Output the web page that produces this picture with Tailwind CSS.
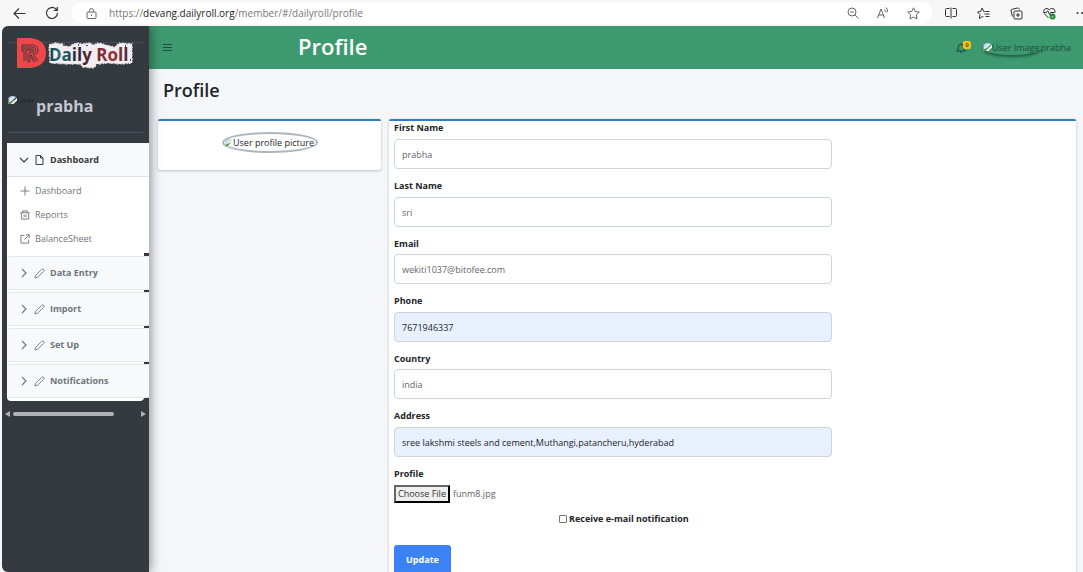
<!DOCTYPE html>
<html lang="en">
<head>
<meta charset="utf-8">
<meta name="viewport" content="width=device-width, initial-scale=1">
<title>Profile</title>
<script src="https://cdn.jsdelivr.net/npm/@tailwindcss/browser@4"></script>
</head>
<body class="flex h-screen flex-col overflow-hidden bg-[#f7f7f7] font-['Open_Sans','Noto_Sans',sans-serif] text-[9px] text-[#212529]">
<svg class="hidden">
  <defs>
    <symbol id="broken" viewBox="0 0 10 10"><path d="M1 9V4Q1 1 5 0L9 1Z" fill="#cfe3f7"/><path d="M0 9Q2 5 4 6L8 4 5 9Z" fill="#4f9a3c"/><path d="M3 9 10 2V5L6 9Z" fill="#fff"/><path d="M0 9V4Q1 1 4 0H8" fill="none" stroke="#a9b5bd"/></symbol>
    <symbol id="chevron" viewBox="0 0 10 10"><path d="M3 1 7 5 3 9" fill="none" stroke="currentColor" stroke-width="1.1"/></symbol>
    <symbol id="pencil" viewBox="0 0 11 11"><path d="M1 10 1.6 7.6 7.6 1.4Q8.6.5 9.7 1.3 10.5 2.4 9.6 3.4L3.4 9.4Z" fill="none" stroke="currentColor" stroke-width=".9"/></symbol>
  </defs>
</svg>

<header class="flex h-[26px] shrink-0 items-center text-[#333]">
  <button aria-label="Back" class="ml-[13px]"><svg class="size-[13px]" viewBox="0 0 13 13" fill="none" stroke="currentColor" stroke-width="1.1"><path d="M12.500 6.500H1M6 1.500 1 6.500 6 11.500"/></svg></button>
  <button aria-label="Refresh" class="ml-[19px]"><svg class="size-[14px]" viewBox="0 0 14 14" fill="none" stroke="currentColor" stroke-width="1.200"><path d="M12.500 7A5.500 5.500 0 1 1 10.800 3L12 4.200M12.300 1V4.500H8.800"/></svg></button>
  <div class="ml-[13px] flex h-[22px] flex-1 items-center rounded-full bg-white pr-3 pl-[14px] text-[#666]">
    <svg class="size-[11px] shrink-0" viewBox="0 0 11 11" fill="none" stroke="currentColor"><rect x="1" y="4" width="9" height="6.500" rx="1"/><path d="M3.500 4V2.500Q3.500.5 5.500.5T7.500 2.500V4"/><path d="M5.500 6.500V8"/></svg>
    <input aria-label="Address bar" id="url" class="sr-only" value="https://devang.dailyroll.org/member/#/dailyroll/profile">
    <label for="url" class="ml-[12px] flex-1 text-[10px] leading-[14px] whitespace-nowrap text-[#777]">https://<span class="text-[#222]">devang.dailyroll.org</span>/member/#/dailyroll/profile</label>
    <div class="flex items-center gap-[18px]">
      <button aria-label="Zoom out"><svg class="size-[12px]" viewBox="0 0 12 12" fill="none" stroke="currentColor"><circle cx="5" cy="5" r="4"/><path d="M3 5H7M8 8 11.500 11.500"/></svg></button>
      <button aria-label="Read aloud"><svg class="size-[12px]" viewBox="0 0 12 12" fill="none" stroke="currentColor"><path d="M.5 11 4 2 7.500 11M1.800 8H6.300M7.500 2.500Q8.700 3.500 8 5M9 .5Q11.500 2.500 10 5.500"/></svg></button>
      <button aria-label="Favorite"><svg class="size-[13px]" viewBox="0 0 13 13" fill="none" stroke="currentColor" stroke-linejoin="round"><path d="M6.500.8 8.200 4.500 12.300 5 9.300 7.800 10 12 6.500 10 3 12 3.700 7.800.7 5 4.800 4.500Z"/></svg></button>
    </div>
  </div>
  <div class="flex items-center gap-[20px] pl-[13px]">
    <button aria-label="Split screen"><svg class="size-[12px]" viewBox="0 0 12 12" fill="none" stroke="currentColor"><path d="M6 .5V11.500M4.500 1.500H1.500Q.5 1.500.5 2.500V8.500Q.5 9.500 1.500 9.500H4.500M7.500 1.500H10.500Q11.500 1.500 11.500 2.500V8.500Q11.500 9.500 10.500 9.500H7.500"/></svg></button>
    <button aria-label="Favorites"><svg class="size-[13px]" viewBox="0 0 13 13" fill="none" stroke="currentColor" stroke-linejoin="round"><path d="M8 4.500H6.700L5.200 1 3.700 4.500.5 5 3 7.500 2.300 11.500 5.500 9.500 6.500 10M8.500 4.500H12.500M7.500 7H12.500M8.500 9.500H12.500"/></svg></button>
    <button aria-label="Collections"><svg class="size-[13px]" viewBox="0 0 13 13" fill="none" stroke="currentColor"><rect x="4" y="4" width="8" height="8" rx="1"/><path d="M8 6V10M6 8H10M2.500 9.500 1 4Q.7 2.700 2 2.300L7.500 1Q9 .8 9.500 2.500"/></svg></button>
    <button aria-label="Browser essentials"><svg class="size-[13px]" viewBox="0 0 13 13" fill="none" stroke="currentColor"><path d="M5.500 11 1.300 6.500Q-.2 4 1.500 2.200 4 .2 6.300 2.700 8.600.2 11.200 2.200 12.700 4 11.700 6M1 5.500H3.500L4.700 3.700 6.500 7.500 7.500 5.500H11"/><circle cx="9.500" cy="9.500" r="3" fill="#178a2c" stroke="none"/><path d="M8 9.500 9.100 10.600 11 8.600" stroke="#fff" stroke-width=".8"/></svg></button>
    <button aria-label="More"><svg class="h-[12px] w-[7px]" viewBox="0 0 7 12" fill="currentColor"><circle cx="1.500" cy="6" r="1"/><circle cx="6" cy="6" r="1"/></svg></button>
  </div>
</header>

<div class="ml-[2px] flex min-h-0 flex-1 overflow-hidden rounded-l-md bg-[#f4f6f9]">
  <aside class="relative z-10 w-[147px] shrink-0 overflow-hidden bg-[#343a40] shadow-[2px_0_10px_rgba(0,0,0,.4)]">
    <div class="relative ml-[6px] h-[62px]">
      <div class="absolute top-[16px] left-0 w-[136px] border-t border-[#454c53]"></div>
      <svg class="relative h-[46px] w-[130px]" viewBox="0 0 130 46" role="img" aria-label="Daily Roll">
        <defs><linearGradient id="ink"><stop offset="0" stop-color="#123c4b"/><stop offset=".15" stop-color="#287078"/><stop offset=".35" stop-color="#252336"/><stop offset=".55" stop-color="#6d2730"/><stop offset=".8" stop-color="#983238"/><stop offset="1" stop-color="#4b2933"/></linearGradient></defs>
        <path d="M9 12H23Q38 14 38 27T23 42H9Z" fill="#ee4649"/>
        <g fill="none" stroke="#53343b" stroke-width="1"><path d="M14 19H24Q30 19 30 24T25 28L30 35M14 21H24Q28 21 28 24T24 26H21L28 36M14 23H24Q26 23 26 24H18V35M14 25H16V35M14 19V25M20 27V36L22 36V29L26 36"/></g>
        <path d="M41 19 47 17 54 18 60 21 68 17 75 18 81 17 86 19 90 17 99 19 106 21 112 17 124 18 124 37 113 38 100 37 90 38 85 42 75 41 72 38 59 38 42 37Z" fill="#f2edf0" stroke="#e5dee3" stroke-width="1.500" stroke-dasharray="2 1 1 2"/>
        <g fill="#4a4d54"><path d="M55 19h3v1h-3zM61 18h2v2h-2zM70 18h1v2h-1zM88 38h2v1h-2zM98 18h2v1h-2zM105 19h2v2h-2zM117 19h1v2h-1zM78 19h2v1h-2zM122 33h1v2h-1zM76 38h2v1h-2z"/></g>
        <text x="41" y="35" font-size="17" font-weight="700" fill="url(#ink)" class="font-['Open_Sans',sans-serif]">Daily Roll</text>
      </svg>
    </div>
    <div class="mx-[6px] flex h-[45px] border-b border-[#4b545c] pt-[6px]">
      <div class="flex h-3 w-[28px] shrink-0 items-center text-[8px] text-[#22272b]" role="img" aria-label="User Image"><svg class="size-[9px] shrink-0"><use href="#broken"/></svg>User</div>
      <a href="#" class="text-[16px] leading-[24px] font-bold text-[#c2c7d0]">prabha</a>
    </div>

    <nav class="mt-[10px] ml-[5px] w-[137px] text-[#6c757d]">
      <div class="w-[142px] bg-white">
        <button class="flex h-[34px] w-full items-center rounded-tl-sm border-b border-[#dee2e6] bg-[#f8f9fa] pl-3 font-bold text-[#343a40]"><svg class="size-[10px] rotate-90"><use href="#chevron"/></svg>
          <svg class="mx-[6px] h-[10px] w-[9px]" viewBox="0 0 9 10" fill="none" stroke="currentColor"><path d="M1 .5H5.500L8 3V9.500H1ZM5.500.5V3H8"/></svg>Dashboard</button>
        <div class="flex flex-col gap-[12px] py-[8px] pl-[13px] leading-[12px]">
          <a href="#" class="flex items-center gap-[5px]"><svg class="size-[10px]" viewBox="0 0 11 11" fill="none" stroke="currentColor"><path d="M5.500.5V10.500M.5 5.500H10.500"/></svg>Dashboard</a>
          <a href="#" class="flex items-center gap-[5px]"><svg class="size-[10px]" viewBox="0 0 11 11" fill="none" stroke="currentColor"><path d="M.5 3H10.500M3 3V1H8V3M1.500 3V10H9.500V3M4.500 5V8M6.500 5V8"/></svg>Reports</a>
          <a href="#" class="flex items-center gap-[5px]"><svg class="size-[10px]" viewBox="0 0 11 11" fill="none" stroke="currentColor"><path d="M5 1.500H1V10H9.500V6M6.500.8H10.200V4.500M10 1 5 6"/></svg>BalanceSheet</a>
        </div>
      </div>
      <div class="flex flex-col gap-[2px] rounded-b-sm bg-white py-[3px] font-bold">
        <button class="flex h-[34px] w-[142px] items-center rounded-tl-sm border-y border-[#e4e8eb] bg-[#f8f9fa] pl-3"><svg class="size-[10px]"><use href="#chevron"/></svg><svg class="mx-[5px] size-[11px]"><use href="#pencil"/></svg>Data Entry</button>
        <button class="flex h-[34px] w-[142px] items-center rounded-tl-sm border-y border-[#e4e8eb] bg-[#f8f9fa] pl-3"><svg class="size-[10px]"><use href="#chevron"/></svg><svg class="mx-[5px] size-[11px]"><use href="#pencil"/></svg>Import</button>
        <button class="flex h-[34px] w-[142px] items-center rounded-tl-sm border-y border-[#e4e8eb] bg-[#f8f9fa] pl-3"><svg class="size-[10px]"><use href="#chevron"/></svg><svg class="mx-[5px] size-[11px]"><use href="#pencil"/></svg>Set Up</button>
        <button class="flex h-[34px] w-[142px] items-center rounded-tl-sm border-y border-[#e4e8eb] bg-[#f8f9fa] pl-3"><svg class="size-[10px]"><use href="#chevron"/></svg><svg class="mx-[5px] size-[11px]"><use href="#pencil"/></svg>Notifications</button>
      </div>
    </nav>
    <div class="mt-[10px] flex items-center px-[3px] text-[#b0b2b5]">
      <svg class="h-[6px] w-[5px]" viewBox="0 0 5 6" fill="currentColor"><path d="M5 0V6L0 3Z"/></svg>
      <div class="ml-[3px] h-[4px] w-[101px] rounded-full bg-[#b0b2b5]"></div>
      <svg class="ml-auto h-[6px] w-[5px]" viewBox="0 0 5 6" fill="currentColor"><path d="M0 0V6L5 3Z"/></svg>
    </div>
  </aside>

  <main class="flex min-w-0 flex-1 flex-col">
    <div class="flex h-[43px] shrink-0 items-center bg-[#3d9970] pr-[12px] pl-[14px] text-[#1f4d38]">
      <button aria-label="Toggle menu"><svg class="size-[9px]" viewBox="0 0 9 9" stroke="currentColor"><path d="M0 1.500H9M0 4.500H9M0 7.500H9"/></svg></button>
      <h1 class="-mt-[4px] ml-[126px] text-[22px] leading-[30px] font-semibold text-white">Profile</h1>
      <div class="ml-auto flex items-center">
        <button aria-label="Notifications" class="relative mr-[12px] w-[15px]"><svg class="size-[10px]" viewBox="0 0 10 10" fill="none" stroke="currentColor" stroke-width="1.100"><path d="M1 8H9Q7.700 7 7.700 4.500 7.700 1.500 5 1.500T2.300 4.500Q2.300 7 1 8ZM5 1.500V.2M4 9.300H6"/></svg><span class="absolute -top-[2px] right-0 rounded-xs bg-[#ffc107] px-[2px] text-[6px] leading-[8px] font-bold text-[#5f4a08]">0</span></button>
        <a href="#" class="flex items-center"><span class="flex h-[14px] w-[58px] items-center rounded-[50%] whitespace-nowrap shadow-[0_2px_3px_rgba(0,0,0,.4)]" role="img" aria-label="User Image"><svg class="size-[9px] shrink-0"><use href="#broken"/></svg>User Image</span>prabha</a>
      </div>
    </div>

    <div class="flex min-h-0 flex-1 flex-col pt-[8px] pr-[7px] pl-[9px]">
      <h2 class="mb-[15px] ml-[5px] text-[18px] leading-[27px] font-semibold">Profile</h2>
      <div class="flex min-h-0 flex-1 items-start gap-[8px]">
        <section class="flex h-[51px] w-[223px] shrink-0 justify-center rounded-xs border-t-2 border-[#2a7fc9] bg-white pt-[11px] shadow-[0_0_1px_rgba(0,0,0,.13),0_1px_3px_rgba(0,0,0,.2)]">
          <div class="flex h-[21px] w-[96px] items-center justify-center rounded-[50%] border-2 border-[#adb5bd] whitespace-nowrap" role="img" aria-label="User profile picture"><svg class="size-[8px] shrink-0"><use href="#broken"/></svg>User profile picture</div>
        </section>
        <section class="min-w-0 flex-1 rounded-xs border-t-2 border-[#2a7fc9] bg-white px-[5px] pb-5 shadow-[0_0_1px_rgba(0,0,0,.13),0_1px_3px_rgba(0,0,0,.2)]">
          <form>
            <div class="flex max-w-[438px] flex-col gap-[10px]">
              <div><label for="first" class="mb-[4px] block leading-[14px] font-bold">First Name</label><input id="first" value="prabha" class="block h-[30px] w-full rounded-[4px] border border-[#ced4da] bg-white px-[7px] text-[#5f666d]"></div>
              <div><label for="last" class="mb-[4px] block leading-[14px] font-bold">Last Name</label><input id="last" value="sri" class="block h-[30px] w-full rounded-[4px] border border-[#ced4da] bg-white px-[7px] text-[#5f666d]"></div>
              <div><label for="email" class="mb-[3px] block leading-[14px] font-bold">Email</label><input id="email" type="email" value="wekiti1037@bitofee.com" class="block h-[30px] w-full rounded-[4px] border border-[#ced4da] bg-white px-[7px] text-[#5f666d]"></div>
              <div><label for="phone" class="mb-[4px] block leading-[14px] font-bold">Phone</label><input id="phone" value="7671946337" class="block h-[30px] w-full rounded-[4px] border border-[#ced4da] bg-[#e8f0fe] px-[7px] text-[#212529]"></div>
              <div><label for="country" class="mb-[3px] block leading-[14px] font-bold">Country</label><input id="country" value="india" class="block h-[30px] w-full rounded-[4px] border border-[#ced4da] bg-white px-[7px] text-[#5f666d]"></div>
              <div><label for="address" class="mb-[4px] block leading-[14px] font-bold">Address</label><input id="address" value="sree lakshmi steels and cement,Muthangi,patancheru,hyderabad" class="block h-[30px] w-full rounded-[4px] border border-[#ced4da] bg-[#e8f0fe] px-[7px] text-[#212529]"></div>
              <div><label for="photo" class="mb-[4px] block leading-[14px] font-bold">Profile</label><input id="photo" type="file" class="block h-[18px] w-full text-[#5f666d] file:mr-[3px] file:h-[18px] file:border-2 file:border-solid file:border-t-[#666] file:border-r-black file:border-b-black file:border-l-[#666] file:bg-[#efefef] file:px-[2px] file:text-[#333]"></div>
            </div>
            <label class="mt-[9px] ml-[165px] flex items-center gap-[2px] leading-[14px] font-bold"><input type="checkbox" class="size-[8px] appearance-none rounded-[1px] border border-[#767676] bg-white">Receive e-mail notification</label>
            <button type="button" class="mt-[19px] h-[30px] w-[57px] rounded-[3px] bg-[#3b82f6] font-bold text-white">Update</button>
          </form>
        </section>
      </div>
    </div>
  </main>
</div>
<script>
  const files = new DataTransfer();
  files.items.add(new File([''], 'funm8.jpg', { type: 'image/jpeg' }));
  document.getElementById('photo').files = files.files;
</script>
</body>
</html>
